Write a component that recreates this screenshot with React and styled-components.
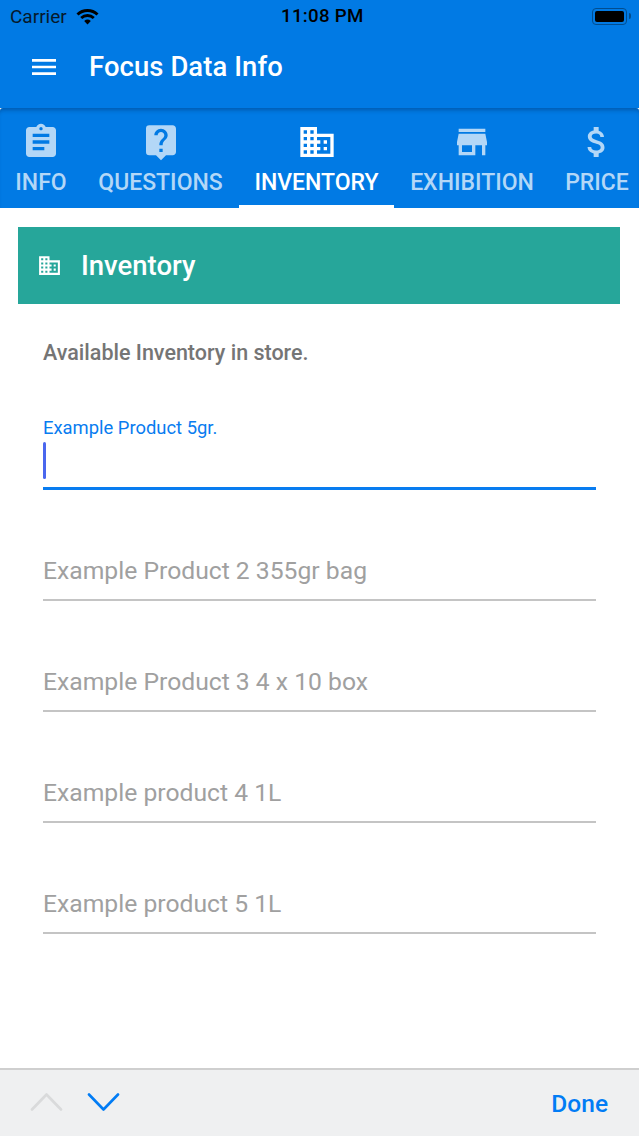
import React from 'react';
import styled, { createGlobalStyle } from 'styled-components';
import { MdAssignment, MdAttachMoney, MdDomain, MdLiveHelp, MdMenu, MdStore } from 'react-icons/md';

const GlobalStyle = createGlobalStyle`
  html, body {
    margin: 0;
    padding: 0;
    background: #fff;
    font-family: Roboto, "Liberation Sans", sans-serif;
  }
  * {
    box-sizing: border-box;
  }
`;

const Screen = styled.div`
  width: 639px;
  height: 1136px;
  display: flex;
  flex-direction: column;
  overflow: hidden;
  background: #fff;
`;

const Header = styled.header`
  height: 108px;
  background: #017ae4;
  flex-shrink: 0;
`;

const StatusBar = styled.div`
  height: 32px;
  padding: 0 8px 0 10px;
  display: grid;
  grid-template-columns: 271px auto 1fr;
  align-items: center;
  color: #000;
`;

const Carrier = styled.div`
  display: flex;
  align-items: center;
  gap: 9px;
  font-size: 19px;
  color: #06192b;
`;

const Clock = styled.div`
  font-size: 18.7px;
  font-weight: 500;
  letter-spacing: 0.3px;
`;

const Battery = styled.div`
  justify-self: end;
  display: flex;
  align-items: center;
  gap: 2px;
`;

const BatteryBody = styled.div`
  width: 35px;
  height: 17px;
  padding: 2px;
  border: 1px solid #024d8f;
  border-radius: 4px;
  &::before {
    content: '';
    display: block;
    height: 100%;
    background: #000;
    border-radius: 2px;
  }
`;

const BatteryCap = styled.div`
  width: 2px;
  height: 6px;
  background: #024d8f;
  border-radius: 0 2px 2px 0;
`;

const AppBar = styled.div`
  height: 68px;
  padding: 2px 0 0 28px;
  display: flex;
  align-items: center;
  gap: 29px;
  color: #fff;
`;

const Title = styled.h1`
  margin: 0;
  font-size: 27.4px;
  font-weight: 500;
  letter-spacing: 0.1px;
`;

const Tabs = styled.nav`
  height: 100px;
  display: flex;
  flex-shrink: 0;
  background: #017ae4;
  border-radius: 3px 3px 0 0;
  box-shadow: inset 0 5px 4px -3px rgba(0, 40, 90, 0.4);
`;

const Tab = styled.div`
  width: ${(p) => p.$width}px;
  flex-shrink: 0;
  padding-top: 14px;
  display: flex;
  flex-direction: column;
  align-items: center;
  gap: 7px;
  color: ${(p) => (p.$active ? '#fff' : '#b3d7f7')};
  border-bottom: 3px solid ${(p) => (p.$active ? '#fff' : 'transparent')};
`;

const TabLabel = styled.span`
  font-size: 23px;
  font-weight: 500;
  white-space: nowrap;
  line-height: 28px;
`;

const Main = styled.main`
  flex: 1;
  padding: 19px 19px 0 18px;
`;

const CardTitle = styled.div`
  height: 77px;
  padding-left: 19px;
  display: flex;
  align-items: center;
  gap: 19px;
  background: #26a69a;
  color: #fff;
`;

const CardHeading = styled.h2`
  margin: 0;
  font-size: 27.5px;
  font-weight: 500;
`;

const Form = styled.div`
  padding: 36px 24px 0 25px;
`;

const Intro = styled.p`
  margin: 0 0 50px;
  height: 26px;
  line-height: 26px;
  font-size: 21.5px;
  font-weight: 500;
  color: #757575;
`;

const FieldLabel = styled.label`
  display: block;
  height: 24px;
  line-height: 24px;
  font-size: 18.4px;
  color: #087cf0;
`;

const Field = styled.div`
  height: ${(p) => (p.$focused ? '50px' : '111px')};
  display: flex;
  align-items: flex-end;
  padding-bottom: ${(p) => (p.$focused ? '8px' : '14px')};
  border-bottom: ${(p) => (p.$focused ? '3px solid #087cf0' : '2px solid #c4c4c4')};
  font-size: 24.7px;
  color: #a0a0a0;
`;

const Caret = styled.div`
  width: 3px;
  height: 37px;
  background: #4a67ee;
  border-radius: 2px;
`;

const Toolbar = styled.footer`
  height: 68px;
  flex-shrink: 0;
  padding: 0 31px 0 30px;
  display: flex;
  align-items: center;
  gap: 23px;
  background: #eff0f1;
  border-top: 2px solid #cfcfcf;
`;

const Done = styled.span`
  margin-left: auto;
  font-size: 24.5px;
  font-weight: 500;
  color: #017cf5;
`;

const fields = ['Example Product 2 355gr bag', 'Example Product 3 4 x 10 box', 'Example product 4 1L', 'Example product 5 1L'];

const tabs = [
  { label: 'INFO', width: 82, Icon: MdAssignment },
  { label: 'QUESTIONS', width: 157, Icon: MdLiveHelp },
  { label: 'INVENTORY', width: 155, Icon: MdDomain, active: true },
  { label: 'EXHIBITION', width: 156, Icon: MdStore },
  { label: 'PRICE', width: 94, Icon: MdAttachMoney },
];

const Wifi = () => (
  <svg width="23" height="17" viewBox="0 0 23 17">
    <path d="M1.5 6.5 A14.5 14.5 0 0 1 21.5 6.5" fill="none" stroke="#000" strokeWidth="3" />
    <path d="M5.2 10 A9.5 9.5 0 0 1 17.8 10" fill="none" stroke="#000" strokeWidth="3" />
    <path d="M8.2 13 L11.5 16.4 L14.8 13 A5 5 0 0 0 8.2 13 Z" fill="#000" />
  </svg>
);

const Chevron = ({ up, color }) => (
  <svg width="34" height="20" viewBox="0 0 34 20">
    <path d={up ? 'M2 16.5 L16.5 1.5 L31 16.5' : 'M2 1.5 L16.5 16.5 L31 1.5'} fill="none" stroke={color} strokeWidth="2.6" strokeLinecap="round" strokeLinejoin="round" />
  </svg>
);

const App = () => (
  <Screen>
    <GlobalStyle />
    <Header>
      <StatusBar>
        <Carrier>
          Carrier
          <Wifi />
        </Carrier>
        <Clock>11:08 PM</Clock>
        <Battery>
          <BatteryBody />
          <BatteryCap />
        </Battery>
      </StatusBar>
      <AppBar>
        <MdMenu size={32} />
        <Title>Focus Data Info</Title>
      </AppBar>
    </Header>

    <Tabs>
      {tabs.map(({ label, width, Icon, active }) => (
        <Tab key={label} $width={width} $active={active}>
          <Icon size={40} />
          <TabLabel>{label}</TabLabel>
        </Tab>
      ))}
    </Tabs>

    <Main>
      <CardTitle>
        <MdDomain size={25} />
        <CardHeading>Inventory</CardHeading>
      </CardTitle>
      <Form>
        <Intro>Available Inventory in store.</Intro>
        <FieldLabel>Example Product 5gr.</FieldLabel>
        <Field $focused>
          <Caret />
        </Field>
        {fields.map((field) => (
          <Field key={field}>{field}</Field>
        ))}
      </Form>
    </Main>

    <Toolbar>
      <Chevron up color="#d9dadb" />
      <Chevron color="#017cf5" />
      <Done>Done</Done>
    </Toolbar>
  </Screen>
);

export default App;
